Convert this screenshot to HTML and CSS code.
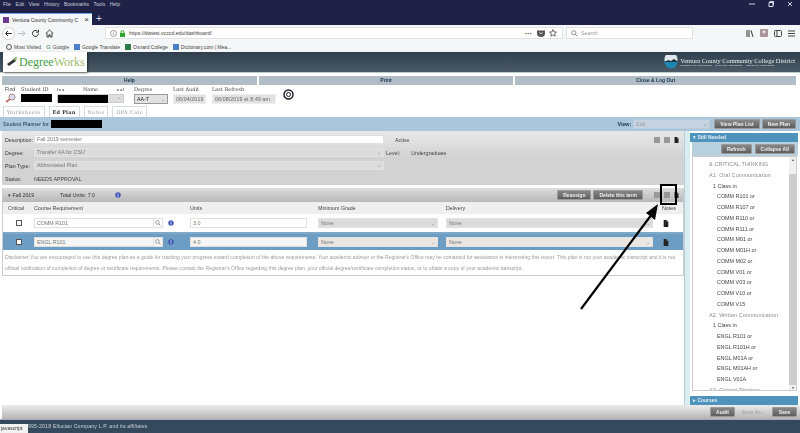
FILE: index.html
```html
<!DOCTYPE html>
<html lang="en">
<head>
    <meta charset="UTF-8">
    <title>Ventura County Community College - DegreeWorks</title>
    <link rel="stylesheet" href="styles.css">
</head>
<body>
    <svg class="defs" width="0" height="0">
        <defs>
            <symbol id="doc" viewBox="0 0 10 12"><path d="M1 0h5l3 3v9H1z" fill="#222"/><path d="M6 0v3h3z" fill="#999"/></symbol>
            <symbol id="lens" viewBox="0 0 10 10"><circle cx="4" cy="4" r="3" fill="none" stroke="#667" stroke-width="1"/><path d="M6.2 6.2L9 9" stroke="#667" stroke-width="1.2"/></symbol>
            <symbol id="info" viewBox="0 0 10 10"><circle cx="5" cy="5" r="4.5" fill="#3a55b5"/><rect x="4.3" y="2" width="1.4" height="1.3" fill="#fff"/><rect x="4.3" y="4" width="1.4" height="3.8" fill="#fff"/></symbol>
        </defs>
    </svg>

    <div class="browser-top">
        <div class="menu-bar">
            <span>File</span><span>Edit</span><span>View</span><span>History</span><span>Bookmarks</span><span>Tools</span><span>Help</span>
            <div class="win-btns">
                <svg width="6" height="6" viewBox="0 0 6 6"><path d="M0 3h6" stroke="#ccd" /></svg>
                <svg width="6" height="6" viewBox="0 0 6 6"><path d="M1 1.5h4v4H1zM2 1V.5h3.5V4" fill="none" stroke="#dde"/></svg>
                <svg width="6" height="6" viewBox="0 0 6 6"><path d="M1 1l4 4M5 1L1 5" stroke="#ccd"/></svg>
            </div>
        </div>
        <div class="tab-strip">
            <div class="tab">
                <span class="favicon"></span>
                <span class="tab-title">Ventura County Community C</span>
                <span class="tab-close">×</span>
            </div>
            <span class="new-tab">+</span>
        </div>
        <div class="toolbar">
            <svg class="tool-icon back" width="13" height="13" viewBox="0 0 13 13"><circle cx="6.5" cy="6.5" r="6" fill="#fff" stroke="#bbb" stroke-width=".6"/><path d="M10 6.5H3.5M6 4L3.5 6.5 6 9" fill="none" stroke="#333" stroke-width="1"/></svg>
            <svg class="tool-icon" width="9" height="9" viewBox="0 0 9 9"><path d="M1 4.5h7M5.5 2L8 4.5 5.5 7" fill="none" stroke="#bbb" stroke-width="1"/></svg>
            <svg class="tool-icon" width="9" height="9" viewBox="0 0 9 9"><path d="M7.5 4.5A3 3 0 1 1 6.5 2.2M7.5 .8v2.4H5.1" fill="none" stroke="#333" stroke-width="1"/></svg>
            <svg class="tool-icon" width="9" height="9" viewBox="0 0 9 9"><path d="M.8 4.5L4.5 1l3.7 3.5M2 4v4h1.8V5.8h1.4V8H7V4" fill="none" stroke="#333" stroke-width=".9"/></svg>
            <div class="url-bar">
                <svg width="7" height="7" viewBox="0 0 7 7"><circle cx="3.5" cy="3.5" r="3" fill="none" stroke="#777" stroke-width=".7"/><path d="M3.5 3v2M3.5 1.8v.6" stroke="#777" stroke-width=".7"/></svg>
                <svg width="7" height="7" viewBox="0 0 7 7"><rect x="1" y="3" width="5" height="4" fill="#2fa32f"/><path d="M2 3V2a1.5 1.5 0 0 1 3 0v1" fill="none" stroke="#2fa32f"/></svg>
                <span class="url">https://dwtest.vcccd.edu/dashboard/</span>
                <span class="url-dots">···</span>
                <svg width="8" height="7" viewBox="0 0 8 7"><path d="M0 .5h8v3a4 3.5 0 0 1-8 0z" fill="#555"/><path d="M2.4 2.4L4 4l1.6-1.6" fill="none" stroke="#fff" stroke-width=".8"/></svg>
                <svg width="8" height="8" viewBox="0 0 8 8"><path d="M4 .6l1 2.3 2.5.2-1.9 1.6.6 2.5L4 5.9 1.8 7.2l.6-2.5L.5 3.1 3 2.9z" fill="none" stroke="#333" stroke-width=".7"/></svg>
            </div>
            <div class="search-bar">
                <svg width="7" height="7"><use href="#lens"/></svg>
                <span>Search</span>
            </div>
            <div class="tool-right">
                <svg width="8" height="7" viewBox="0 0 8 7"><path d="M1 0v7M3 0v7M5 .3l2 6.5" stroke="#444" stroke-width="1.1"/></svg>
                <svg width="8" height="8" viewBox="0 0 8 8"><rect width="8" height="8" rx="1" fill="#a9949a"/><circle cx="4" cy="3" r="1.4" fill="#eee"/></svg>
                <svg width="8" height="7" viewBox="0 0 8 7"><rect x=".5" y=".5" width="7" height="6" rx="1" fill="none" stroke="#444"/><path d="M3 .5v6" stroke="#444"/></svg>
                <svg width="7" height="7" viewBox="0 0 7 7"><path d="M0 1h7M0 3.5h7M0 6h7" stroke="#444"/></svg>
            </div>
        </div>
        <div class="bookmarks">
            <span class="mark"><i class="mark-ico gear"></i>Most Visited</span>
            <span class="mark"><i class="mark-g">G</i>Google</span>
            <span class="mark"><i class="mark-ico blue"></i>Google Translate</span>
            <span class="mark"><i class="mark-ico green"></i>Oxnard College</span>
            <span class="mark"><i class="mark-ico blue"></i>Dictionary.com | Mea...</span>
        </div>
    </div>

    <header class="dw-header">
        <div class="logo">
            <svg width="12" height="12" viewBox="0 0 12 12"><path d="M1 8l7-5 2 2-7 5z" fill="#333"/><path d="M7 2l4-1-1 4z" fill="#8a6"/></svg>
            <span class="logo-degree">Degree</span><span class="logo-works">Works</span>
        </div>
        <div class="district">
            <svg width="14" height="14" viewBox="0 0 14 14"><circle cx="7" cy="7" r="6.5" fill="#1d86b0"/><path d="M.5 6h13V4A6.5 6.5 0 0 0 .5 4z" fill="#dfe8ea"/><path d="M1 7l3-2 3 1 3-2 3 2v1H1z" fill="#20323c"/></svg>
            <div>
                <div class="district-name">Ventura County Community College District</div>
                <div class="district-sub">MOORPARK COLLEGE · OXNARD COLLEGE · VENTURA COLLEGE</div>
            </div>
        </div>
    </header>

    <nav class="dw-nav">
        <a>Help</a><a>Print</a><a>Close &amp; Log Out</a>
    </nav>

    <section class="student-row">
        <div class="find">
            <span>Find</span>
            <svg width="12" height="10" viewBox="0 0 12 10"><circle cx="7" cy="4" r="3" fill="#dde" stroke="#a88" stroke-width="1"/><path d="M5 6L1 9" stroke="#b66" stroke-width="1.6"/></svg>
        </div>
        <div class="field id-field">
            <label>Student ID</label>
            <div class="redact"></div>
        </div>
        <div class="field name-field">
            <label class="name-label"><b>I◂ ◂</b><span>Name</span><b>▸ ▸I</b></label>
            <div class="name-box"><div class="redact"></div><span class="select-arrow">⌄</span></div>
        </div>
        <div class="field degree-field">
            <label>Degree</label>
            <div class="value-box select-box">AA-T<span class="select-arrow">⌄</span></div>
        </div>
        <div class="field audit-field">
            <label>Last Audit</label>
            <div class="value-box">06/04/2019</div>
        </div>
        <div class="field refresh-field">
            <label>Last Refresh</label>
            <div class="value-box">06/08/2019 at 8:49 am</div>
        </div>
        <svg class="ring" width="11" height="11" viewBox="0 0 11 11"><circle cx="5.5" cy="5.5" r="4.5" fill="#fff" stroke="#223" stroke-width="1.5"/><circle cx="5.5" cy="5.5" r="2" fill="#fff" stroke="#223" stroke-width="1"/></svg>
    </section>

    <div class="dw-tabs">
        <a>Worksheets</a><a class="active">Ed Plan</a><a>Notes</a><a>GPA Calc</a>
    </div>

    <div class="planner-bar">
        <span class="planner-label">Student Planner for:</span>
        <div class="redact planner-name"></div>
        <span class="view-label">View:</span>
        <div class="view-select">Edit<span class="select-arrow">⌄</span></div>
        <button class="dark-btn">View Plan List</button>
        <button class="dark-btn">New Plan</button>
    </div>

    <div class="workspace">
        <main class="plan">
            <section class="plan-form">
                <div class="form-row">
                    <label>Description:</label>
                    <div class="input wide">Fall 2019 semester</div>
                    <span class="active-check"></span>
                    <span class="form-text">Active</span>
                    <div class="mini-icons">
                        <i></i><i></i><svg width="5" height="6"><use href="#doc"/></svg>
                    </div>
                </div>
                <div class="form-row">
                    <label>Degree:</label>
                    <div class="input wide grey">Transfer AA for CSU<span class="select-arrow">⌄</span></div>
                    <span class="form-text level">Level:</span>
                    <span class="form-text">Undergraduate</span>
                </div>
                <div class="form-row">
                    <label>Plan Type:</label>
                    <div class="input wide grey">Abbreviated Plan<span class="select-arrow">⌄</span></div>
                </div>
                <div class="form-row">
                    <label>Status:</label>
                    <span class="form-text">NEEDS APPROVAL</span>
                </div>
            </section>

            <section class="term">
                <div class="term-head">
                    <span class="term-name">▾ Fall 2019</span>
                    <span class="term-units">Total Units: 7.0</span>
                    <svg width="6" height="6"><use href="#info"/></svg>
                    <button class="dark-btn reassign">Reassign</button>
                    <button class="dark-btn">Delete this term</button>
                    <div class="mini-icons term-icons">
                        <i></i><i></i><svg width="5" height="6"><use href="#doc"/></svg>
                    </div>
                </div>
                <div class="course-grid grid-head">
                    <span class="col-critical">Critical</span>
                    <span>Course Requirement</span>
                    <span>Units</span>
                    <span>Minimum Grade</span>
                    <span>Delivery</span>
                    <span class="col-notes">Notes</span>
                </div>
                <div class="course-grid course-row">
                    <span class="check"></span>
                    <div class="course-cell">
                        <div class="input course-input">COMM R101<span class="lens-btn"><svg width="6" height="6"><use href="#lens"/></svg></span></div>
                        <svg width="6" height="6"><use href="#info"/></svg>
                    </div>
                    <div class="input units-input">3.0</div>
                    <div class="input grey grade-input">None<span class="select-arrow">⌄</span></div>
                    <div class="input grey">None<span class="select-arrow">⌄</span></div>
                    <svg class="row-doc" width="6" height="7"><use href="#doc"/></svg>
                </div>
                <div class="course-grid course-row selected">
                    <span class="check"></span>
                    <div class="course-cell">
                        <div class="input course-input">ENGL R101<span class="lens-btn"><svg width="6" height="6"><use href="#lens"/></svg></span></div>
                        <svg width="6" height="6"><use href="#info"/></svg>
                    </div>
                    <div class="input units-input">4.0</div>
                    <div class="input grey grade-input">None<span class="select-arrow">⌄</span></div>
                    <div class="input grey">None<span class="select-arrow">⌄</span></div>
                    <svg class="row-doc" width="6" height="7"><use href="#doc"/></svg>
                </div>
                <p class="disclaimer">Disclaimer:You are encouraged to use this degree plan as a guide for tracking your progress toward completion of the above requirements. Your academic advisor or the Registrar's Office may be contacted for assistance in interpreting this report. This plan is not your academic transcript and it is not official notification of completion of degree or certificate requirements. Please contact the Registrar's Office regarding this degree plan, your official degree/certificate completion status, or to obtain a copy of your academic transcript.</p>
            </section>
        </main>

        <div class="splitter"></div>

        <aside class="side">
            <div class="side-bar">▾ Still Needed</div>
            <div class="side-tools">
                <button class="dark-btn">Refresh</button>
                <button class="dark-btn">Collapse All</button>
            </div>
            <div class="needed">
                <ul class="needed-list">
                    <li class="lvl-a">&amp; CRITICAL THINKING</li>
                    <li class="lvl-a">A1. Oral Communication</li>
                    <li class="lvl-b">1 Class in</li>
                    <li class="lvl-c">COMM R101 or</li>
                    <li class="lvl-c">COMM R107 or</li>
                    <li class="lvl-c">COMM R110 or</li>
                    <li class="lvl-c">COMM R111 or</li>
                    <li class="lvl-c">COMM M01 or</li>
                    <li class="lvl-c">COMM M01H or</li>
                    <li class="lvl-c">COMM M02 or</li>
                    <li class="lvl-c">COMM V01 or</li>
                    <li class="lvl-c">COMM V03 or</li>
                    <li class="lvl-c">COMM V10 or</li>
                    <li class="lvl-c">COMM V15</li>
                    <li class="lvl-a">A2. Written Communication</li>
                    <li class="lvl-b">1 Class in</li>
                    <li class="lvl-c">ENGL R101 or</li>
                    <li class="lvl-c">ENGL R101H or</li>
                    <li class="lvl-c">ENGL M01A or</li>
                    <li class="lvl-c">ENGL M01AH or</li>
                    <li class="lvl-c">ENGL V01A</li>
                    <li class="lvl-a">A3. Critical Thinking</li>
                </ul>
                <div class="scrollbar"><span>▴</span><i></i><span>▾</span></div>
            </div>
            <div class="side-bar courses-bar">▸ Courses</div>
        </aside>
    </div>

    <div class="action-bar">
        <button class="dark-btn">Audit</button>
        <span class="save-as">Save As...</span>
        <button class="dark-btn">Save</button>
    </div>
    <footer class="dw-footer">
        <span class="status-text">javascript:</span>
        <span class="copyright">995-2018 Ellucian Company L.P. and its affiliates</span>
    </footer>

    <!-- annotation drawn on top of the screenshot -->
    <div class="callout-box"></div>
    <svg class="callout-arrow" width="800" height="433" viewBox="0 0 800 433">
        <path d="M581 309L652 214" stroke="#000" stroke-width="2.2" fill="none"/>
        <path d="M658 204L646 213 655 220z" fill="#000"/>
    </svg>
</body>
</html>
```

FILE: styles.css
```css
* {
    box-sizing: border-box;
}
html, body {
    margin: 0;
    height: 433px;
    overflow: hidden;
}
body {
    font-family: "Liberation Sans", Arial, sans-serif;
    font-size: 5.3px;
    color: #333;
    background-color: #fff;
    display: flex;
    flex-direction: column;
    position: relative;
    filter: blur(0.3px);
}
.defs {
    position: absolute;
}
button {
    font-family: inherit;
}

/* browser chrome */
.browser-top {
    flex: none;
    height: 52px;
    display: flex;
    flex-direction: column;
}
.menu-bar {
    height: 13px;
    background-color: #1f2246;
    color: #ccd;
    font-size: 5px;
    display: flex;
    align-items: center;
    gap: 4.5px;
    padding: 0 0 5px 3px;
}
.win-btns {
    margin-left: auto;
    display: flex;
    gap: 13px;
    padding-right: 7px;
}
.tab-strip {
    height: 12px;
    background-color: #1f2246;
    display: flex;
    align-items: stretch;
}
.tab {
    width: 92px;
    background-color: #f5f6f7;
    border-top: 1px solid #6aa0f0;
    display: flex;
    align-items: center;
    padding: 0 3px;
    gap: 3px;
    font-size: 5px;
    color: #333;
}
.favicon {
    width: 6px;
    height: 6px;
    flex: none;
    background-color: #6b3a8f;
}
.tab-title {
    flex: 1;
    white-space: nowrap;
}
.tab-close {
    font-size: 8px;
    line-height: 1;
}
.new-tab {
    color: #dde;
    font-size: 10px;
    line-height: 11px;
    padding-left: 4px;
}
.toolbar {
    height: 16px;
    background-color: #f5f6f7;
    display: flex;
    align-items: center;
    padding-left: 2px;
}
.tool-icon {
    margin-right: 5px;
}
.back {
    margin-right: 2px;
}
.url-bar {
    margin-left: 46px;
    width: 458px;
    height: 12px;
    background-color: #fff;
    border: 1px solid #e2e2e4;
    display: flex;
    align-items: center;
    gap: 2px;
    padding: 0 2px 0 4px;
}
.url {
    flex: 1;
    font-size: 5.2px;
    margin-left: 1px;
    color: #444;
}
.url-dots {
    font-weight: bold;
    font-size: 7px;
    margin-right: 3px;
}
.url-bar svg:last-child {
    margin: 0 3px 0 2px;
}
.search-bar {
    margin-left: 3px;
    width: 127px;
    height: 12px;
    background-color: #fff;
    border: 1px solid #e2e2e4;
    display: flex;
    align-items: center;
    gap: 3px;
    padding-left: 4px;
    color: #999;
}
.tool-right {
    margin-left: auto;
    display: flex;
    align-items: center;
    gap: 6px;
    padding-right: 5px;
}
.bookmarks {
    height: 11px;
    background-color: #f5f6f7;
    display: flex;
    align-items: center;
    gap: 5px;
    padding-left: 6px;
    font-size: 5px;
    color: #444;
}
.mark {
    display: flex;
    align-items: center;
    gap: 2px;
}
.mark-ico {
    width: 6px;
    height: 6px;
    display: block;
}
.gear {
    border-radius: 50%;
    border: 1.5px solid #555;
}
.blue {
    background-color: #4a7fc8;
}
.green {
    background-color: #2f7a4a;
}
.mark-g {
    font-style: normal;
    color: #4a8a5a;
    font-size: 6px;
}

/* degreeworks header */
.dw-header {
    flex: none;
    height: 21px;
    background: linear-gradient(#303f4d, #4b5a66);
    display: flex;
    justify-content: space-between;
    border-bottom: 1px solid #bcc;
}
.logo {
    width: 84px;
    height: 20px;
    margin-left: 3px;
    background-color: #fff;
    box-shadow: 1px 1px 2px rgba(0,0,0,0.5);
    display: flex;
    align-items: center;
    padding-left: 3px;
    font-family: "Liberation Serif", serif;
    font-size: 12px;
}
.logo-degree {
    color: #3f9d45;
    margin-left: 1px;
}
.logo-works {
    color: #9dbb6a;
}
.district {
    display: flex;
    align-items: center;
    gap: 2px;
    padding-right: 5px;
    color: #e8eef0;
}
.district-name {
    font-family: "Liberation Serif", serif;
    font-size: 6.4px;
    white-space: nowrap;
}
.district-sub {
    font-size: 2.5px;
    letter-spacing: .3px;
    white-space: nowrap;
}
.dw-nav {
    flex: none;
    display: grid;
    grid-template-columns: 255px 254px 281px;
    gap: 2px;
    padding: 3px 3px 0 2px;
    height: 12px;
}
.dw-nav a {
    background-color: #b1bdc6;
    color: #1d3350;
    font-weight: bold;
    text-align: center;
    line-height: 9px;
    font-size: 5px;
}

/* student row */
.student-row {
    flex: none;
    height: 20px;
    display: flex;
    align-items: flex-start;
    padding: 1px 0 0 5px;
    font-family: "DejaVu Serif", serif;
    color: #444;
}
.find {
    width: 16px;
    display: flex;
    flex-direction: column;
    font-family: "Liberation Sans", sans-serif;
    gap: 1px;
}
.field {
    display: flex;
    flex-direction: column;
    gap: 1px;
}
.field label {
    height: 7px;
    line-height: 7px;
    font-size: 5px;
}
.redact {
    background-color: #000;
    height: 8px;
}
.id-field {
    width: 36px;
}
.id-field .redact {
    width: 31px;
}
.name-field {
    width: 77px;
}
.name-label {
    display: flex;
    width: 67px;
    justify-content: space-between;
}
.name-label b {
    font-size: 4px;
    font-weight: normal;
}
.name-box {
    width: 67px;
    height: 9px;
    display: flex;
    background-color: #ddd;
    border: 1px solid #ccc;
}
.name-box .redact {
    width: 50px;
    height: 8px;
}
.select-arrow {
    margin-left: auto;
    color: #888;
    font-size: 5px;
    line-height: 5px;
    padding-right: 2px;
}
.degree-field {
    width: 39px;
}
.value-box {
    height: 10px;
    line-height: 9px;
    background-color: #e2e2e2;
    border: 1px solid #eee;
    padding-left: 2px;
    color: #666;
    font-family: "Liberation Sans", sans-serif;
    font-size: 5.2px;
    letter-spacing: .15px;
    white-space: nowrap;
}
.select-box {
    width: 34px;
    display: flex;
    align-items: center;
    color: #222;
    border-color: #999;
}
.audit-field {
    width: 39px;
}
.audit-field .value-box {
    width: 33px;
}
.refresh-field {
    width: 71px;
}
.refresh-field .value-box {
    width: 64px;
}
.ring {
    margin-top: 3px;
}
.dw-tabs {
    flex: none;
    height: 12px;
    display: flex;
    align-items: flex-end;
    gap: 4px;
    padding-left: 3px;
    font-family: "DejaVu Serif", serif;
    font-size: 5px;
}
.dw-tabs a {
    height: 11px;
    line-height: 10px;
    padding: 0 3px;
    border: 1px solid #d8dcdc;
    border-bottom: 0;
    color: #99a;
    letter-spacing: .4px;
}
.dw-tabs .active {
    color: #333;
    font-weight: bold;
    letter-spacing: .2px;
}
.planner-bar {
    flex: none;
    height: 14px;
    background-color: #a9c6dc;
    display: flex;
    align-items: center;
    padding: 0 4px 0 3px;
    color: #234;
}
.planner-name {
    width: 51px;
    margin-left: 1px;
}
.view-label {
    margin-left: auto;
    font-weight: bold;
}
.view-select {
    margin: 0 2px 0 2px;
    width: 77px;
    height: 10px;
    line-height: 9px;
    background-color: #c4d3df;
    border: 1px solid #bcccd8;
    padding-left: 2px;
    color: #999;
    display: flex;
    align-items: center;
}
.dark-btn {
    height: 10px;
    padding: 0 5px;
    border: 1px solid #999;
    border-radius: 1px;
    background: linear-gradient(#888, #5e5e5e);
    color: #eee;
    font-size: 5px;
    font-weight: bold;
    line-height: 1;
}
.planner-bar .dark-btn {
    margin-left: 2px;
    padding: 0 5px;
}

/* workspace */
.workspace {
    flex: none;
    height: 274px;
    display: flex;
}
.plan {
    width: 684px;
    padding-left: 2px;
}
.plan-form {
    height: 54px;
    background: linear-gradient(#e8e8e8, #d2d2d2 50%);
    padding-top: 2px;
}
.form-row {
    height: 13px;
    display: flex;
    align-items: center;
    padding-left: 3px;
}
.form-row label {
    width: 29px;
    flex: none;
}
.input {
    height: 9px;
    background-color: #fff;
    border: 1px solid #e0e0e0;
    padding-left: 2px;
    line-height: 7px;
    color: #777;
    display: flex;
    align-items: center;
}
.input.grey {
    background-color: #dcdcdc;
    border-color: #e2e2e2;
}
.wide {
    width: 350px;
    flex: none;
}
.active-check {
    width: 5px;
    height: 5px;
    margin: 0 2px 0 4px;
}
.form-text {
    color: #444;
}
.level {
    margin: 0 11px 0 2px;
}
.mini-icons {
    margin-left: auto;
    display: flex;
    align-items: center;
    gap: 4px;
    padding-right: 5px;
}
.mini-icons i {
    width: 6px;
    height: 6px;
    background-color: #999;
    display: block;
}
.term {
    margin-top: 3px;
    border: 1px solid #ccc;
    border-top: 0;
}
.term-head {
    height: 14px;
    background: linear-gradient(#ddd, #b8b8b8);
    display: flex;
    align-items: center;
    padding-left: 5px;
}
.term-name {
    width: 52px;
}
.term-units {
    width: 55px;
}
.reassign {
    margin-left: auto;
    margin-right: 2px;
}
.term-icons {
    margin-left: 11px;
    padding-right: 4px;
}
.course-grid {
    display: grid;
    grid-template-columns: 23px 153px 125px 125px 207px 1fr;
    column-gap: 3px;
    align-items: center;
    padding-left: 5px;
}
.grid-head {
    height: 12px;
    background-color: #efefef;
    color: #444;
}
.col-notes {
    padding-left: 6px;
}
.course-row {
    height: 18px;
}
.course-row .input {
    height: 10px;
}
.selected {
    background-color: #6d9dc2;
    border-top: 2px solid #7fa9c9;
}
.selected .input {
    background-color: #f5f5f5;
}
.selected .input.grey {
    background-color: #ebe6e2;
}
.check {
    width: 6px;
    height: 6px;
    margin-left: 8px;
    background-color: #fff;
    border: 1px solid #555;
}
.course-cell {
    display: flex;
    align-items: center;
    gap: 5px;
}
.course-input {
    width: 129px;
    flex: none;
}
.units-input {
    width: 117px;
}
.grade-input {
    width: 120px;
}
.lens-btn {
    margin-left: auto;
    width: 9px;
    height: 8px;
    border-left: 1px solid #ddd;
    display: flex;
    align-items: center;
    justify-content: center;
}
.row-doc {
    margin-left: 7px;
}
.disclaimer {
    margin: 0;
    padding: 2px 0 3px 2px;
    height: 25px;
    font-size: 5.08px;
    line-height: 11px;
    color: #999;
}
.splitter {
    width: 6px;
    background-color: #d9eef0;
    border-left: 1px solid #bcd;
}
.side {
    flex: 1;
    padding: 2px 2px 0 0;
    display: flex;
    flex-direction: column;
}
.side-bar {
    height: 9px;
    line-height: 9px;
    background-color: #4f93bd;
    color: #e4eef5;
    padding-left: 3px;
    font-size: 5px;
    font-weight: bold;
}
.side-tools {
    height: 14px;
    background-color: #b9d0de;
    display: flex;
    justify-content: flex-end;
    align-items: center;
    gap: 3px;
    padding-right: 3px;
    margin-left: 2px;
}
.needed {
    height: 235px;
    margin: 0 1px 0 2px;
    border: 1px solid #ccc;
    display: flex;
    overflow: hidden;
}
.needed-list {
    flex: 1;
    margin: 0;
    padding: 2px 0 0;
    list-style: none;
}
.needed-list li {
    height: 10.75px;
    line-height: 10.75px;
    white-space: nowrap;
    font-size: 5.4px;
}
.lvl-a {
    padding-left: 16px;
    color: #8b8b8b;
    letter-spacing: .15px;
}
.lvl-b {
    padding-left: 20px;
    color: #444;
}
.lvl-c {
    padding-left: 24px;
    color: #444;
}
.scrollbar {
    width: 7px;
    background-color: #f0f0f0;
    display: flex;
    flex-direction: column;
    color: #555;
    font-size: 4px;
    text-align: center;
}
.scrollbar i {
    flex: 1;
    margin: 12px 0 0;
    background-color: #cdcdcd;
}
.courses-bar {
    margin-top: 5px;
}

/* bottom */
.action-bar {
    flex: none;
    height: 14px;
    background: linear-gradient(#ececec, #b4b4b4);
    margin-left: 2px;
    display: flex;
    align-items: center;
    justify-content: flex-end;
    gap: 6px;
    padding-right: 3px;
}
.action-bar .dark-btn {
    width: 25px;
    padding: 0;
}
.save-as {
    color: #aaa;
    font-size: 5px;
    font-weight: bold;
    width: 25px;
    text-align: center;
    white-space: nowrap;
}
.dw-footer {
    flex: 1;
    background-color: #34495c;
    color: #c9d2da;
    display: flex;
    align-items: flex-end;
    border-top: 1px solid #aab;
}
.status-text {
    width: 28px;
    height: 9px;
    line-height: 9px;
    background-color: #f2f2f2;
    color: #333;
    padding-left: 1px;
    font-size: 5px;
}
.copyright {
    align-self: flex-start;
    margin-top: 3px;
    white-space: nowrap;
    letter-spacing: .1px;
}

/* annotation */
.callout-box {
    position: absolute;
    left: 660px;
    top: 184px;
    width: 17px;
    height: 21px;
    border: 2px solid #000;
}
.callout-arrow {
    position: absolute;
    left: 0;
    top: 0;
    pointer-events: none;
}
```
